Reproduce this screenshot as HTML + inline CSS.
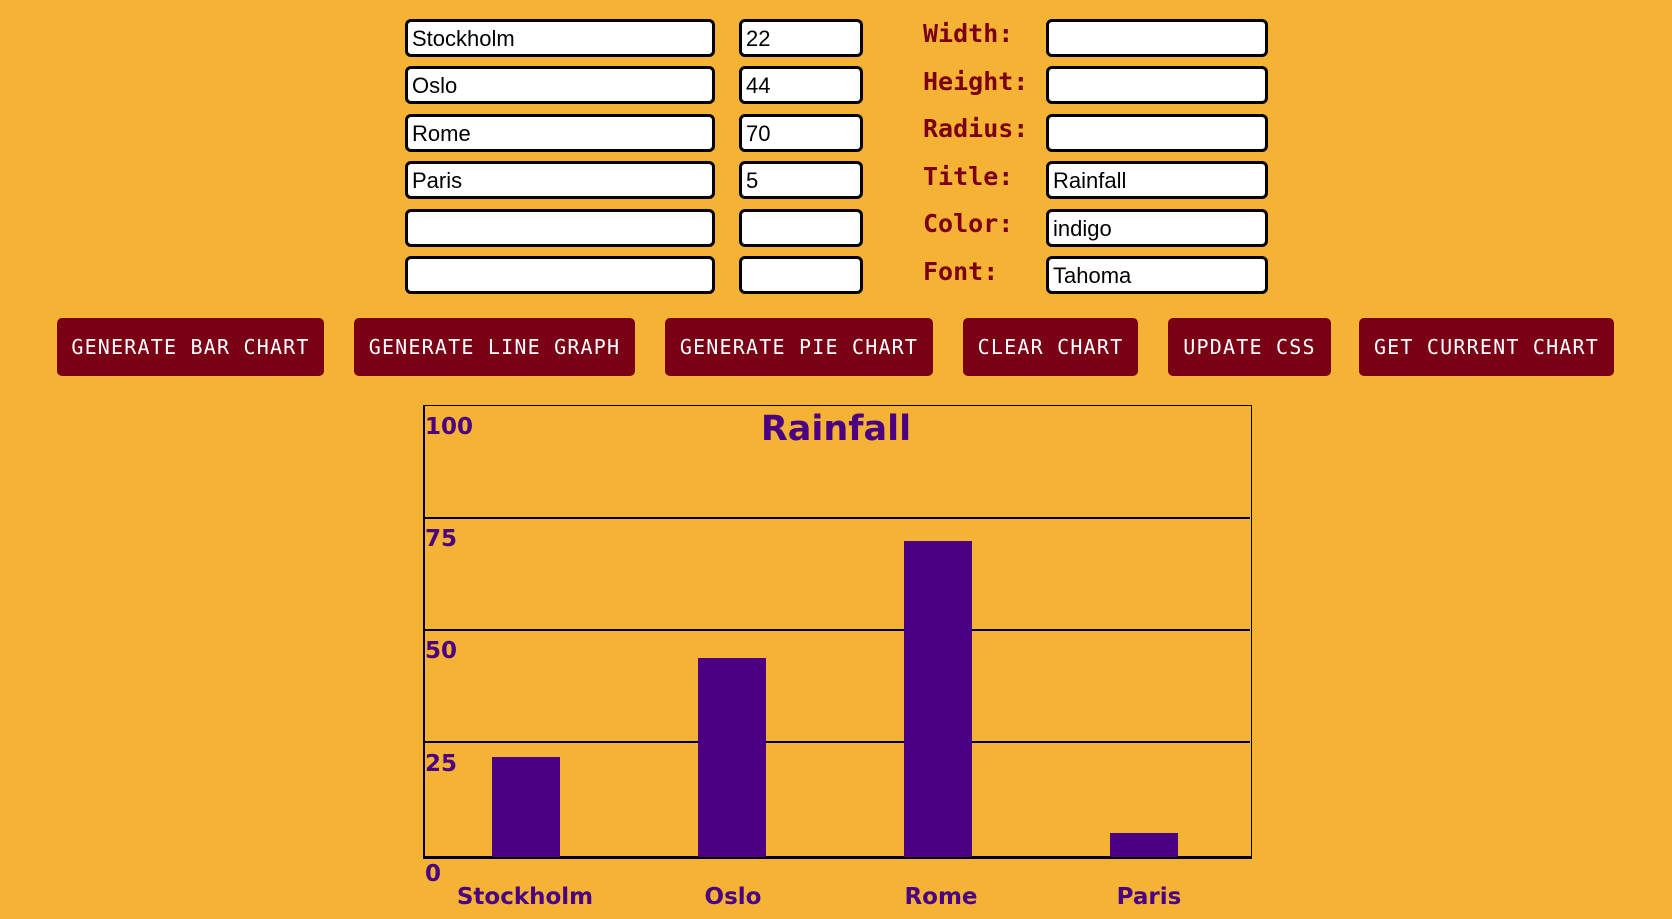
<!DOCTYPE html>
<html><head><style>
body{margin:0;width:1672px;height:919px;background:#f5b335;position:relative;overflow:hidden;font-family:"Liberation Sans",sans-serif}
.in{position:absolute;box-sizing:border-box;height:38px;border:3px solid #000;border-radius:6px;background:#fff;font-size:22px;padding:4px 0 0 4px;color:#000}
.lb{position:absolute;left:923px;font-family:"DejaVu Sans Mono","Liberation Mono",monospace;font-weight:bold;font-size:25px;color:#7a0016}
.bt{position:absolute;top:318px;height:58px;background:#7a0016;color:#fff;border-radius:5px;font-family:"DejaVu Sans Mono","Liberation Mono",monospace;font-size:20px;line-height:58px;text-align:center;letter-spacing:1.2px}
.ch{font-family:"DejaVu Sans",sans-serif;font-weight:bold;color:#4b0082;position:absolute}
.g{position:absolute;left:423px;width:827px;height:2px;background:#000}
.bar{position:absolute;background:#4b0082;width:68px;bottom:62px}
.y{font-size:23px;left:425px}
.x{font-size:23px;top:884px;width:200px;text-align:center}
</style></head><body>
<div class="in" style="left:405px;top:19px;width:310px">Stockholm</div>
<div class="in" style="left:405px;top:66px;width:310px">Oslo</div>
<div class="in" style="left:405px;top:114px;width:310px">Rome</div>
<div class="in" style="left:405px;top:161px;width:310px">Paris</div>
<div class="in" style="left:405px;top:209px;width:310px"></div>
<div class="in" style="left:405px;top:256px;width:310px"></div>
<div class="in" style="left:739px;top:19px;width:124px">22</div>
<div class="in" style="left:739px;top:66px;width:124px">44</div>
<div class="in" style="left:739px;top:114px;width:124px">70</div>
<div class="in" style="left:739px;top:161px;width:124px">5</div>
<div class="in" style="left:739px;top:209px;width:124px"></div>
<div class="in" style="left:739px;top:256px;width:124px"></div>
<div class="lb" style="top:19px">Width:</div>
<div class="lb" style="top:67px">Height:</div>
<div class="lb" style="top:114px">Radius:</div>
<div class="lb" style="top:162px">Title:</div>
<div class="lb" style="top:209px">Color:</div>
<div class="lb" style="top:257px">Font:</div>
<div class="in" style="left:1046px;top:19px;width:222px"></div>
<div class="in" style="left:1046px;top:66px;width:222px"></div>
<div class="in" style="left:1046px;top:114px;width:222px"></div>
<div class="in" style="left:1046px;top:161px;width:222px">Rainfall</div>
<div class="in" style="left:1046px;top:209px;width:222px">indigo</div>
<div class="in" style="left:1046px;top:256px;width:222px">Tahoma</div>
<div class="bt" style="left:57px;width:267px">GENERATE BAR CHART</div>
<div class="bt" style="left:354px;width:281px">GENERATE LINE GRAPH</div>
<div class="bt" style="left:665px;width:268px">GENERATE PIE CHART</div>
<div class="bt" style="left:963px;width:175px">CLEAR CHART</div>
<div class="bt" style="left:1168px;width:163px">UPDATE CSS</div>
<div class="bt" style="left:1359px;width:255px">GET CURRENT CHART</div>
<div style="position:absolute;left:423px;top:405px;width:826px;height:450px;border:1px solid #000;border-left:2px solid #000;border-bottom:3px solid #000"></div>
<div class="g" style="top:517px"></div>
<div class="g" style="top:629px"></div>
<div class="g" style="top:741px"></div>
<div class="bar" style="left:492px;top:757px"></div>
<div class="bar" style="left:698px;top:658px"></div>
<div class="bar" style="left:904px;top:541px"></div>
<div class="bar" style="left:1110px;top:833px"></div>
<div class="ch" style="left:0;width:1672px;text-align:center;top:409px;font-size:35px">Rainfall</div>
<div class="ch y" style="top:414px">100</div>
<div class="ch y" style="top:526px">75</div>
<div class="ch y" style="top:638px">50</div>
<div class="ch y" style="top:751px">25</div>
<div class="ch y" style="top:861px">0</div>
<div class="ch x" style="left:425px">Stockholm</div>
<div class="ch x" style="left:633px">Oslo</div>
<div class="ch x" style="left:841px">Rome</div>
<div class="ch x" style="left:1049px">Paris</div>
</body></html>
